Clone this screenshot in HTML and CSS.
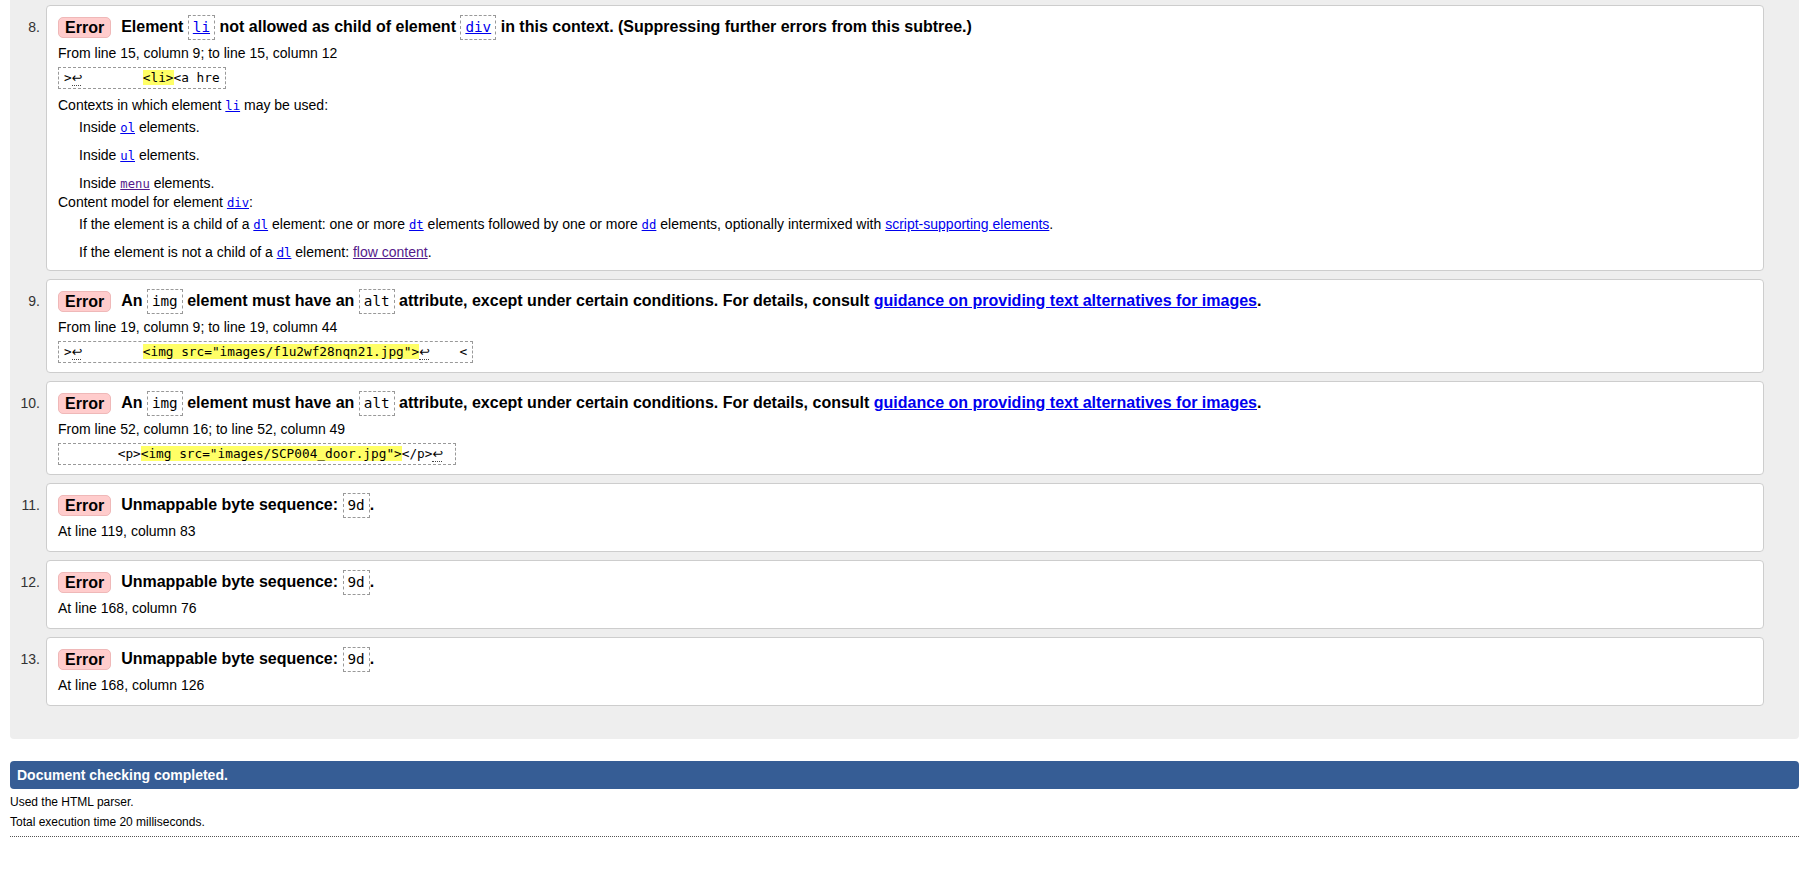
FILE: index.html
```html
<!DOCTYPE html>
<html lang="en">
<head>
<meta charset="utf-8">
<title>Validation results</title>
<link rel="stylesheet" href="styles.css">
</head>
<body>
<div class="results">
  <ol class="msgs">
    <li class="msg">
      <div class="card">
        <p class="title"><strong class="badge">Error</strong><span class="text">Element <code class="box"><a href="#">li</a></code> not allowed as child of element <code class="box"><a href="#">div</a></code> in this context. (Suppressing further errors from this subtree.)</span></p>
        <p class="loc">From line 15, column 9; to line 15, column 12</p>
        <p class="extract"><code>&gt;<b class="lf">↩</b>        <mark>&lt;li&gt;</mark>&lt;a hre</code></p>
        <dl class="details">
          <dt>Contexts in which element <a href="#"><code>li</code></a> may be used:</dt>
          <dd>Inside <a href="#"><code>ol</code></a> elements.</dd>
          <dd>Inside <a href="#"><code>ul</code></a> elements.</dd>
          <dd>Inside <a href="#" class="visited"><code>menu</code></a> elements.</dd>
          <dt>Content model for element <a href="#"><code>div</code></a>:</dt>
          <dd>If the element is a child of a <a href="#"><code>dl</code></a> element: one or more <a href="#"><code>dt</code></a> elements followed by one or more <a href="#"><code>dd</code></a> elements, optionally intermixed with <a href="#">script-supporting elements</a>.</dd>
          <dd>If the element is not a child of a <a href="#"><code>dl</code></a> element: <a href="#" class="visited">flow content</a>.</dd>
        </dl>
      </div>
    </li>
    <li class="msg">
      <div class="card">
        <p class="title"><strong class="badge">Error</strong><span class="text">An <code class="box">img</code> element must have an <code class="box">alt</code> attribute, except under certain conditions. For details, consult <a href="#">guidance on providing text alternatives for images</a>.</span></p>
        <p class="loc">From line 19, column 9; to line 19, column 44</p>
        <p class="extract"><code>&gt;<b class="lf">↩</b>        <mark>&lt;img src="images/f1u2wf28nqn21.jpg"&gt;</mark><b class="lf">↩</b>    &lt;</code></p>
      </div>
    </li>
    <li class="msg">
      <div class="card">
        <p class="title"><strong class="badge">Error</strong><span class="text">An <code class="box">img</code> element must have an <code class="box">alt</code> attribute, except under certain conditions. For details, consult <a href="#">guidance on providing text alternatives for images</a>.</span></p>
        <p class="loc">From line 52, column 16; to line 52, column 49</p>
        <p class="extract"><code>       &lt;p&gt;<mark>&lt;img src="images/SCP004_door.jpg"&gt;</mark>&lt;/p&gt;<b class="lf">↩</b> </code></p>
      </div>
    </li>
    <li class="msg">
      <div class="card">
        <p class="title"><strong class="badge">Error</strong><span class="text">Unmappable byte sequence: <code class="box plain">9d</code>.</span></p>
        <p class="loc">At line 119, column 83</p>
      </div>
    </li>
    <li class="msg">
      <div class="card">
        <p class="title"><strong class="badge">Error</strong><span class="text">Unmappable byte sequence: <code class="box plain">9d</code>.</span></p>
        <p class="loc">At line 168, column 76</p>
      </div>
    </li>
    <li class="msg">
      <div class="card">
        <p class="title"><strong class="badge">Error</strong><span class="text">Unmappable byte sequence: <code class="box plain">9d</code>.</span></p>
        <p class="loc">At line 168, column 126</p>
      </div>
    </li>
  </ol>
</div>
<p class="done">Document checking completed.</p>
<p class="info">Used the HTML parser.</p>
<p class="info">Total execution time 20 milliseconds.</p>
<hr class="rule">
</body>
</html>
```
FILE: styles.css
```css
html, body {
  margin: 0;
  padding: 0;
  background: #fff;
}
body {
  padding: 0 18px 0 10px;
  font-family: "Liberation Sans", Arial, sans-serif;
  font-size: 14px;
  color: #000;
}
a {
  color: #0000ee;
  text-decoration: underline;
}
a.visited {
  color: #551a8b;
}
code {
  font-family: "DejaVu Sans Mono", "Liberation Mono", monospace;
  font-size: 12.25px;
  line-height: 1;
}
.results {
  background: #eee;
  border-radius: 0 0 4px 4px;
  padding: 5px 35px 33px 0;
}
.msgs {
  list-style: none;
  margin: 0;
  padding: 0;
  counter-reset: msg 7;
  display: flex;
  flex-direction: column;
  gap: 8px;
}
.msg {
  display: grid;
  grid-template-columns: 36px 1fr;
}
.msg::before {
  counter-increment: msg;
  content: counter(msg) ".";
  text-align: right;
  padding: 8px 6px 0 0;
  line-height: 28px;
  color: #333;
  font-size: 14px;
}
.card {
  background: #fff;
  border: 1px solid #cdcdcd;
  border-radius: 4px;
  padding: 7px 11px 9px;
}
.title {
  margin: 0;
  height: 28px;
  line-height: 28px;
  font-size: 16px;
  font-weight: bold;
  display: flex;
  align-items: center;
  gap: 10px;
  white-space: nowrap;
}
.badge {
  display: inline-block;
  background: #fcc;
  border: 1px solid #efb8b8;
  border-radius: 5px;
  padding: 0 6px;
  line-height: 19px;
  font-weight: bold;
  color: #000;
}
.box {
  display: inline-block;
  border: 1px dashed #999;
  padding: 0 4px;
  line-height: 23px;
  font-size: 14.3px;
  font-weight: normal;
  vertical-align: middle;
}
.box.plain {
  color: #000;
}
.loc {
  margin: 3px 0 2px;
  line-height: 18px;
}
.extract {
  margin: 5px 0 0;
  display: flex;
}
.extract code {
  display: block;
  border: 1px dashed #999;
  padding: 0 5px;
  height: 20px;
  line-height: 20px;
  font-size: 12.75px;
  white-space: pre;
  color: #000;
  overflow: hidden;
}
.extract mark {
  background: #ff6;
  color: #000;
}
.lf {
  font-family: "DejaVu Sans", sans-serif;
  font-weight: normal;
  border-bottom: 1px dotted #444;
  letter-spacing: -1px;
}
.details {
  margin: 7px 0 0;
  line-height: 18px;
}
.details dt {
  margin: 0;
}
.details dd {
  margin: 0 0 0 21px;
}
.details dt + dd {
  margin-top: 4px;
}
.details dd + dd {
  margin-top: 10px;
}
.details dd + dt {
  margin-top: 1px;
}
.done {
  margin: 22px 0 0;
  background: #365d95;
  color: #fff;
  border-radius: 4px;
  padding: 0 7px;
  line-height: 28px;
  font-weight: bold;
  font-size: 14px;
}
.info {
  margin: 0;
  font-size: 12px;
  line-height: 20px;
  padding-top: 3px;
}
.info + .info {
  padding-top: 0;
}
.rule {
  margin: 4px 0 0;
  border: 0;
  border-top: 1px dotted #555;
  height: 0;
}
```
